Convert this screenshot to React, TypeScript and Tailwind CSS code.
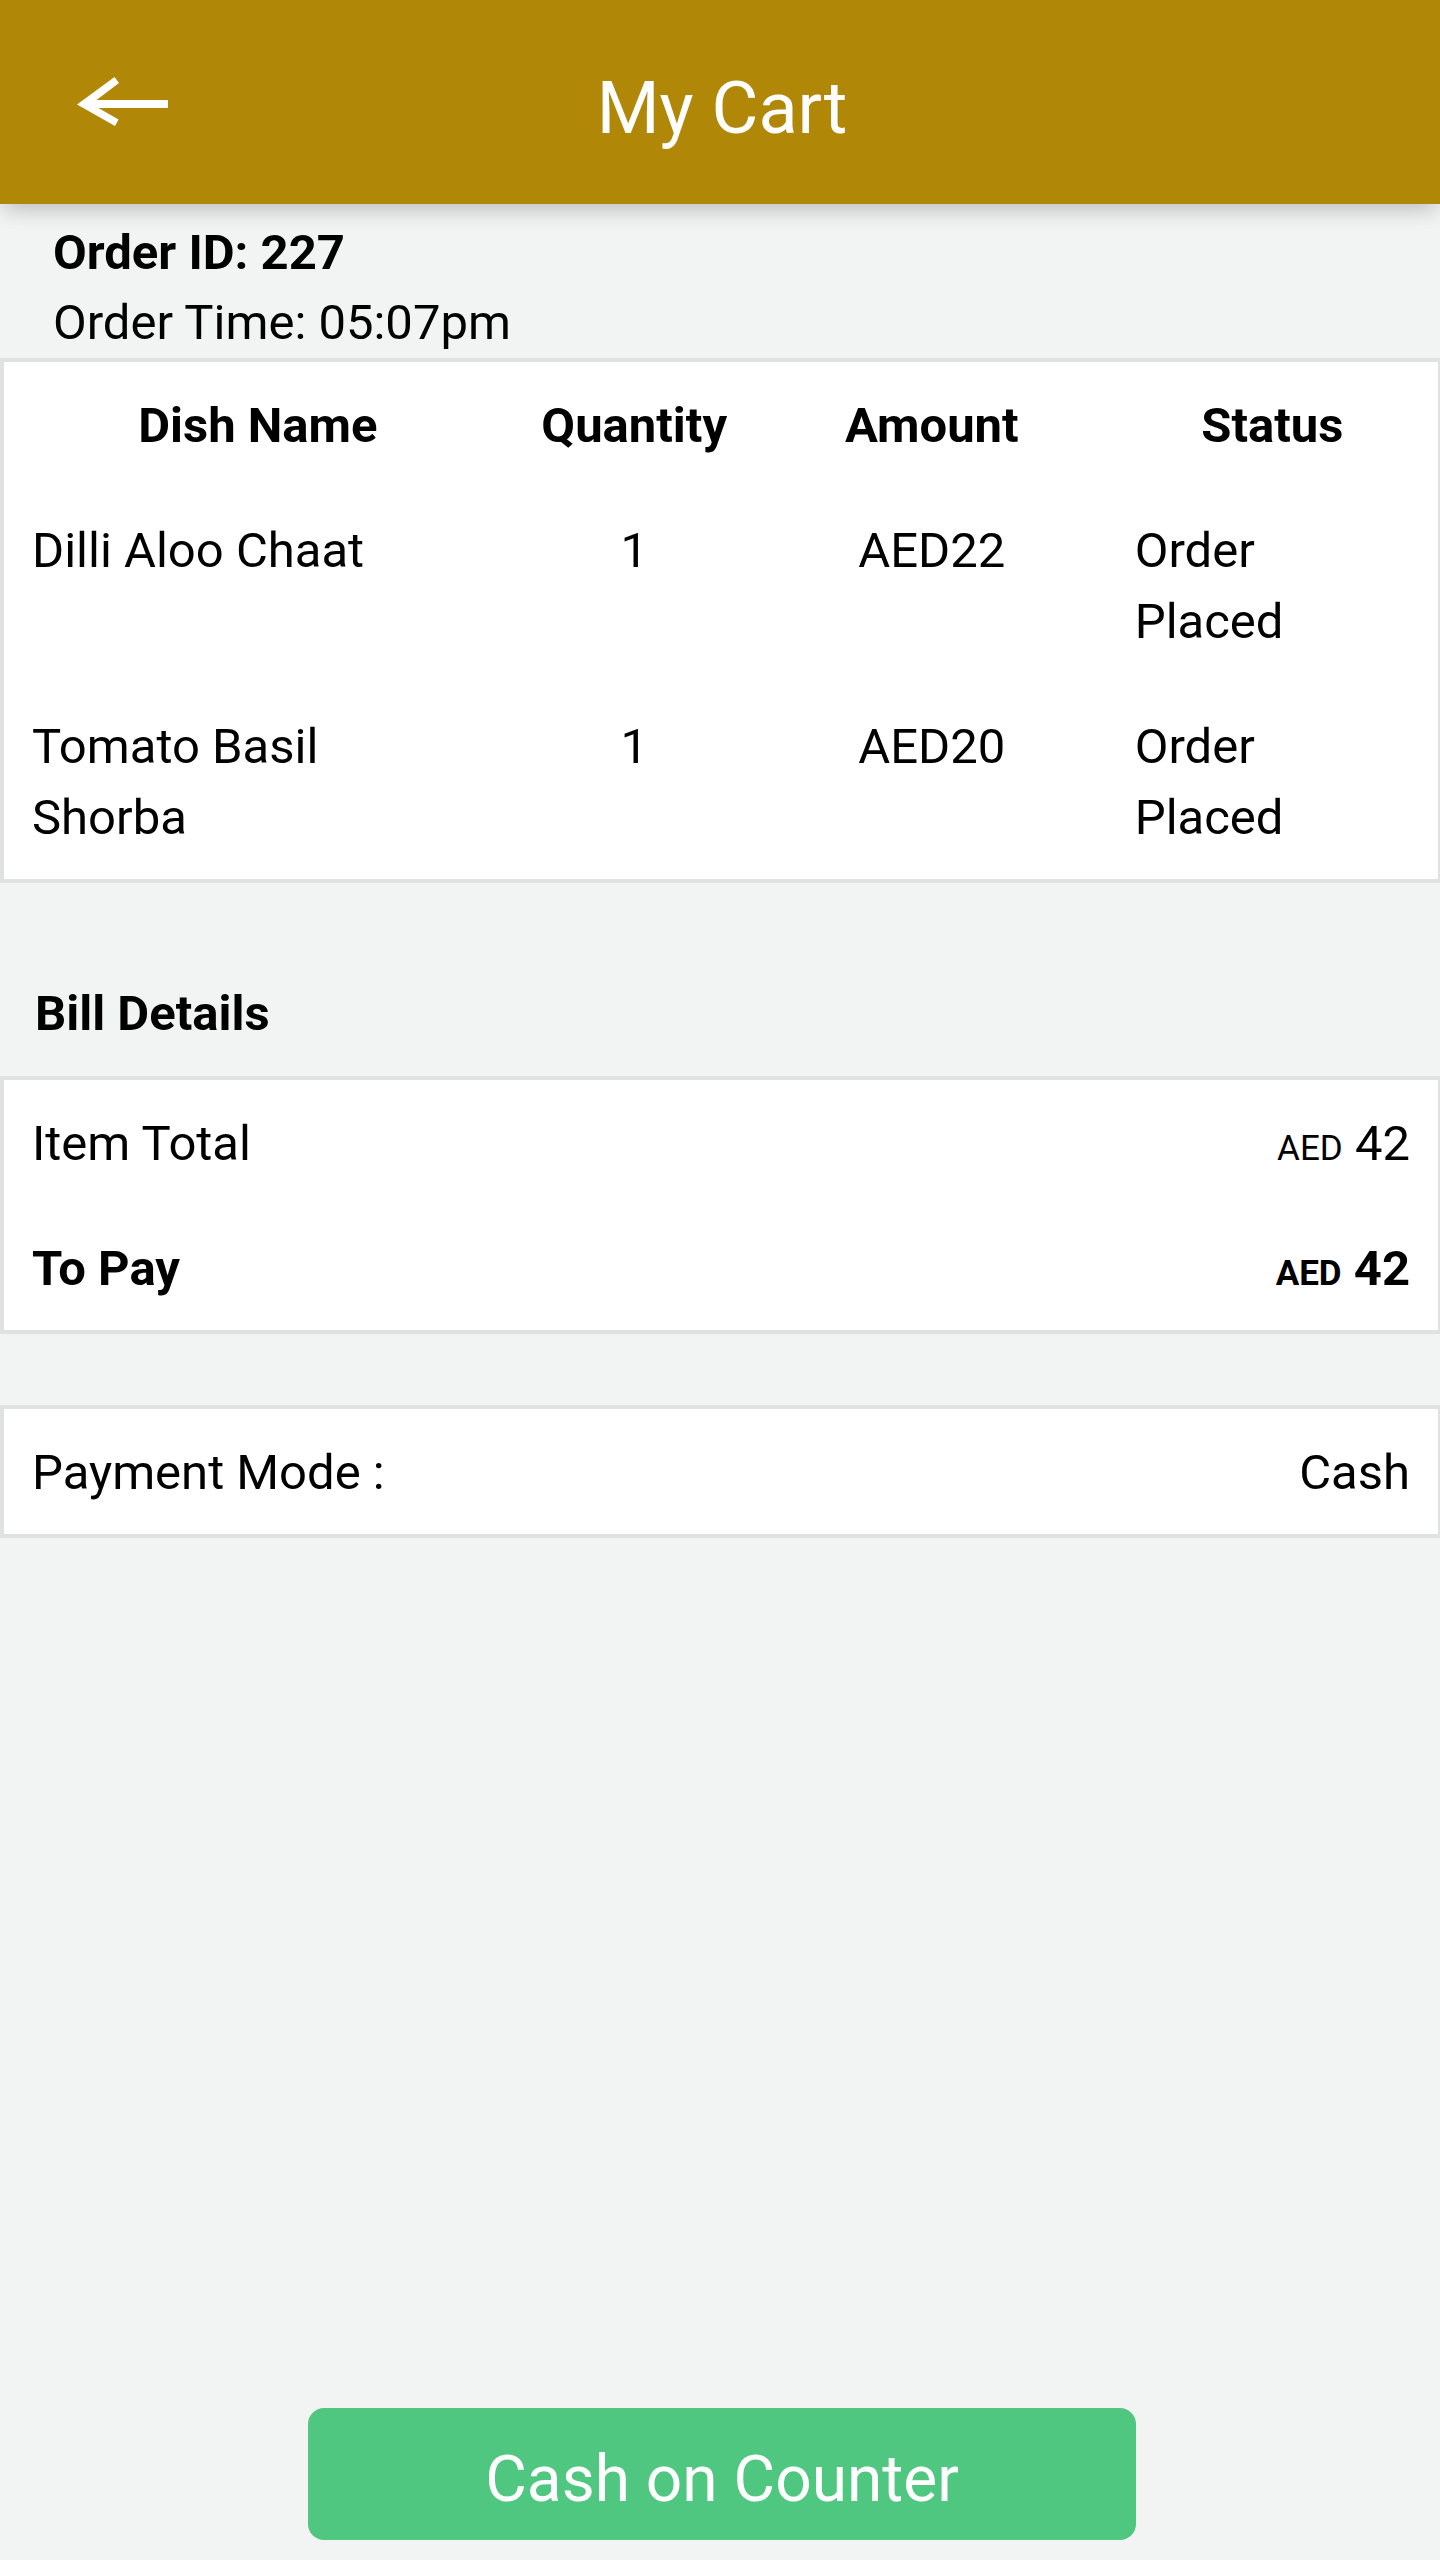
import type { ReactNode } from 'react';

type OrderLine = {
  dish: string;
  quantity: number;
  amount: number;
  status: string;
};

const currency = 'AED';

const orderLines: OrderLine[] = [
  { dish: 'Dilli Aloo Chaat', quantity: 1, amount: 22, status: 'Order Placed' },
  { dish: 'Tomato Basil Shorba', quantity: 1, amount: 20, status: 'Order Placed' },
];

function BackArrow() {
  return (
    <svg viewBox="0 0 91 49" className="h-[49px] w-[91px]" fill="currentColor" aria-hidden="true">
      <path d="M0 27.5 37.5 0 42 6 19.5 23H91v8H21.5L41.5 42.5 38 49Z" />
    </svg>
  );
}

function Header() {
  return (
    <header className="relative grid grid-cols-[1fr_auto_1fr] items-center bg-[#b18707] pt-[60px] pr-[73px] pb-[46px] pl-[77px] text-white shadow-[0_10px_20px_-4px_rgba(0,0,0,0.22)]">
      <button type="button" aria-label="Back" className="-mt-4 justify-self-start">
        <BackArrow />
      </button>
      <h1 className="text-7xl leading-[98px]">My Cart</h1>
    </header>
  );
}

function Card({ children }: { children: ReactNode }) {
  return <div className="border-4 border-r-2 border-[#e0e2e1] bg-white">{children}</div>;
}

function OrderTable() {
  return (
    <Card>
      <table className="w-full table-fixed">
        <thead>
          <tr>
            <th scope="col" className="w-[35.4%] px-7 pt-7 pb-[26px]">Dish Name</th>
            <th scope="col" className="w-[17.1%] pt-7 pb-[26px]">Quantity</th>
            <th scope="col" className="w-[24.4%] px-7 pt-7 pb-[26px]">Amount</th>
            <th scope="col" className="px-7 pt-7 pb-[26px]">Status</th>
          </tr>
        </thead>
        <tbody>
          {orderLines.map((line) => (
            <tr key={line.dish} className="align-top">
              <td className="pt-7 pr-10 pb-[26px] pl-7">{line.dish}</td>
              <td className="px-7 pt-7 pb-[26px] text-center">{line.quantity}</td>
              <td className="px-7 pt-7 pb-[26px] text-center">
                {currency}
                {line.amount}
              </td>
              <td className="pt-7 pr-10 pb-[26px] pl-7">{line.status}</td>
            </tr>
          ))}
        </tbody>
      </table>
    </Card>
  );
}

function Money({ value }: { value: number }) {
  return (
    <span>
      <span className="text-[35px] leading-none">{currency}</span> {value}
    </span>
  );
}

function Row({ label, bold = false, children }: { label: string; bold?: boolean; children: ReactNode }) {
  return (
    <div className={`flex items-baseline justify-between px-7 pt-7 pb-[26px] ${bold ? 'font-bold' : ''}`}>
      <dt>{label}</dt>
      <dd>{children}</dd>
    </div>
  );
}

export default function App() {
  const total = orderLines.reduce((sum, line) => sum + line.amount, 0);

  return (
    <div className="flex min-h-screen flex-col bg-[#f2f4f3] font-['Roboto',sans-serif] text-black">
      <Header />
      <main className="text-[49px] leading-[71px]">
        <section className="px-[53px] pt-3.5 leading-[70px]">
          <p className="font-bold">Order ID: 227</p>
          <p>Order Time: 05:07pm</p>
        </section>
        <OrderTable />
        <h2 className="px-[35px] pt-[95px] pb-[27px] font-bold">Bill Details</h2>
        <Card>
          <dl>
            <Row label="Item Total">
              <Money value={total} />
            </Row>
            <Row label="To Pay" bold>
              <Money value={total} />
            </Row>
          </dl>
        </Card>
        <div className="mt-[71px]">
          <Card>
            <dl>
              <Row label="Payment Mode :">Cash</Row>
            </dl>
          </Card>
        </div>
      </main>
      <footer className="mt-auto flex justify-center pb-5 pl-1">
        <button type="button" className="w-[57.6%] rounded-2xl bg-[#50c780] pt-[26px] pb-3.5 text-[64px] leading-[92px] text-white">
          Cash on Counter
        </button>
      </footer>
    </div>
  );
}
